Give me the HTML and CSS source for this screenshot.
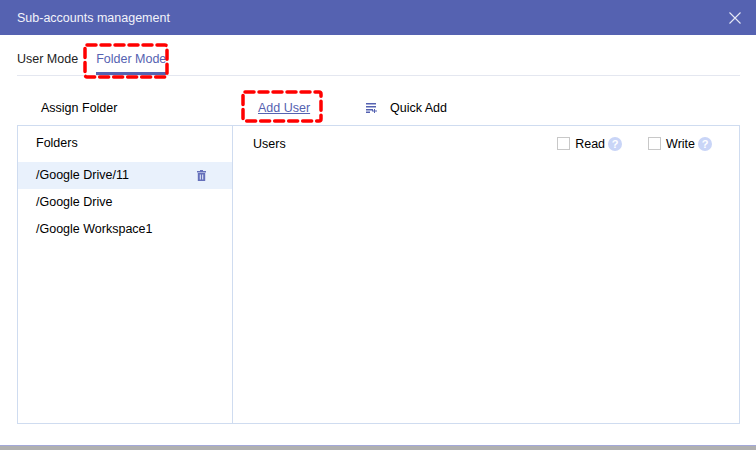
FILE: index.html
```html
<!DOCTYPE html>
<html lang="en">
<head>
<meta charset="utf-8">
<title>Sub-accounts management</title>
<link rel="stylesheet" href="styles.css">
</head>
<body>
<div class="dialog">
  <header class="header">
    <span class="title">Sub-accounts management</span>
    <svg class="close" width="12" height="12" viewBox="0 0 12 12"><path d="M.5.5l11 11M11.500.5l-11 11" stroke="#e6e8f5" stroke-width="1.100" fill="none"/></svg>
  </header>
  <main class="content">
    <nav class="tabs">
      <span class="tab">User Mode</span>
      <span class="tab tab-active">Folder Mode
        <svg class="mark mark-tab" width="86" height="36" viewBox="0 0 86 36"><rect x="2" y="2" width="82" height="32" rx="2" fill="none" stroke="#f00" stroke-width="3.500" stroke-dasharray="9 5" stroke-linecap="round"/></svg>
      </span>
    </nav>
    <div class="toolbar">
      <span class="assign">Assign Folder</span>
      <span class="add-user">Add User
        <svg class="mark mark-add" width="82" height="33" viewBox="0 0 82 33"><rect x="2" y="2" width="78" height="29" rx="2" fill="none" stroke="#f00" stroke-width="3.500" stroke-dasharray="9 5" stroke-linecap="round"/></svg>
      </span>
      <span class="quick">
        <svg width="11" height="10" viewBox="0 0 11 10"><path d="M0 0h10v1.500H0zM0 3h10v1.500H0zM0 6h7v1.500H0zM0 8.500h4V10H0zM8 6h1v1.500h2v1H9V10H8V8.500H6v-1h2z" fill="#5562b1"/></svg>
        Quick Add
      </span>
    </div>
    <section class="panel">
      <aside class="folders">
        <div class="col-head">Folders</div>
        <div class="folder folder-active">
          <span class="folder-name">/Google Drive/11</span>
          <svg class="trash" width="9" height="11" viewBox="0 0 9 11"><path fill-rule="evenodd" d="M3 0h3v1h3v1.500H0V1h3zM.8 3h7.400v8H.8zM2.800 4.500v5h1v-5zM5.200 4.500v5h1v-5z" fill="#6570bb"/></svg>
        </div>
        <div class="folder"><span class="folder-name">/Google Drive</span></div>
        <div class="folder"><span class="folder-name">/Google Workspace1</span></div>
      </aside>
      <div class="users">
        <div class="users-head">
          <span class="users-title">Users</span>
          <span class="perm"><i class="check"></i>Read<i class="help">?</i></span>
          <span class="perm perm-write"><i class="check"></i>Write<i class="help">?</i></span>
        </div>
      </div>
    </section>
  </main>
  <div class="backdrop"></div>
</div>
</body>
</html>
```
FILE: styles.css
```css
* { box-sizing: border-box; }
html, body { margin: 0; padding: 0; }
body { width: 756px; height: 450px; overflow: hidden; background: #fff; font-family: "Liberation Sans", Arial, sans-serif; font-size: 12.5px; color: #000; }
.dialog { height: 450px; display: flex; flex-direction: column; }
.header { height: 35px; flex: none; background: #5562b1; color: #f2f3fa; display: flex; align-items: center; justify-content: space-between; padding: 0 15px 0 17px; }
.close { display: block; }
.content { flex: 1; padding: 0 16px 0 17px; display: flex; flex-direction: column; }
.tabs { height: 41px; flex: none; display: flex; align-items: flex-end; gap: 18px; border-bottom: 1px solid #e4e7f0; color: #222; }
.tab { position: relative; height: 37px; padding-top: 14px; line-height: 14px; }
.tab-active { color: #5562b1; border-bottom: 3px solid #5562b1; }
.mark { position: absolute; display: block; }
.mark-tab { left: -13px; top: 5px; }
.mark-add { left: -17px; top: -11px; }
.toolbar { height: 49px; flex: none; display: flex; align-items: center; padding-top: 14px; }
.assign { margin-left: 24px; width: 217px; }
.add-user { position: relative; color: #5562b1; text-decoration: underline; width: 108px; }
.quick { display: flex; align-items: center; gap: 13px; }
.panel { height: 299px; flex: none; border: 1px solid #cfdcf0; display: flex; }
.folders { width: 215px; flex: none; border-right: 1px solid #cfdcf0; }
.col-head { height: 36px; padding: 0 18px; line-height: 35px; }
.folder { height: 27px; line-height: 26px; padding: 0 26px 0 18px; display: flex; align-items: center; justify-content: space-between; }
.folder-name { margin-bottom: 2px; }
.folder-active { background: #e9f1fc; }
.users { flex: 1; }
.users-head { height: 35px; display: flex; align-items: center; padding: 0 27px 0 20px; }
.users-title { flex: 1; }
.perm { display: flex; align-items: center; }
.perm-write { margin-left: 26px; }
.check { width: 13px; height: 13px; border: 1px solid #c8c8c8; margin-right: 5px; }
.help { width: 14px; height: 14px; border-radius: 50%; background: #c9d5f7; color: #fff; font-size: 11px; font-style: normal; font-weight: bold; text-align: center; line-height: 14px; margin-left: 3px; }
.backdrop { height: 5px; flex: none; background: #b0b0b0; border-top: 1px solid #a3a8d8; }
```
